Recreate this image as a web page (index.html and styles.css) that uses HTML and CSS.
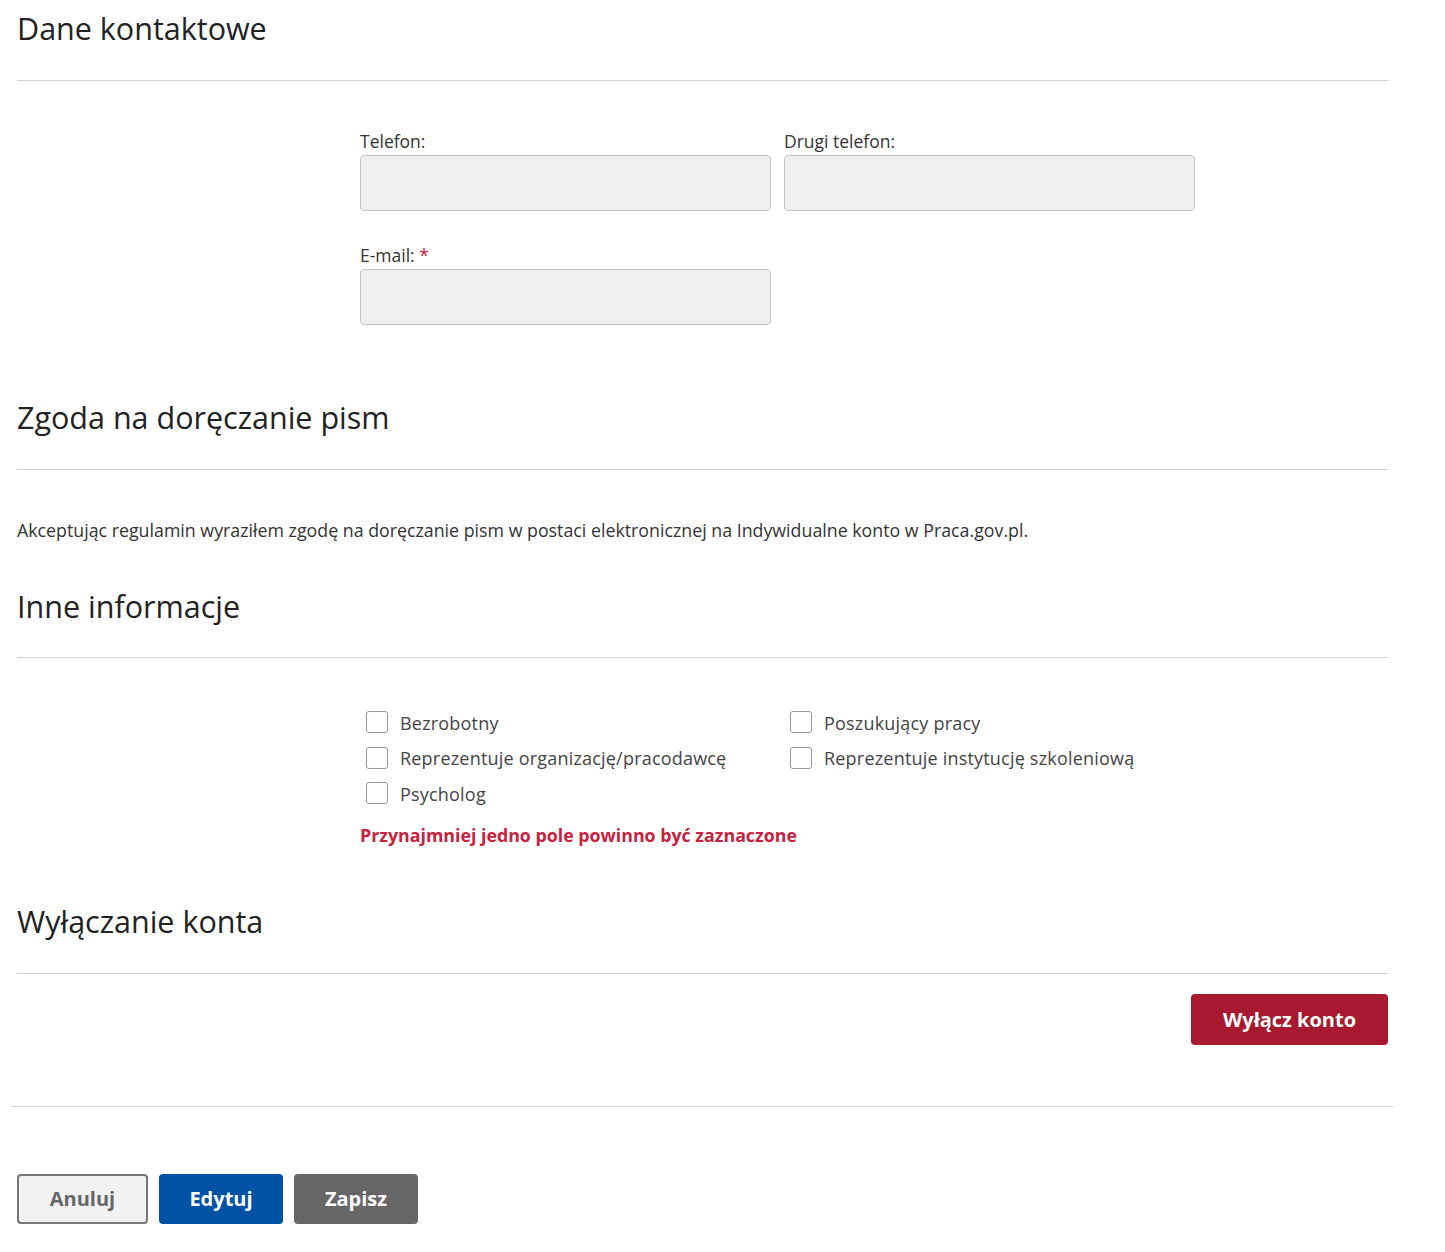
FILE: index.html
```html
<!DOCTYPE html>
<html lang="pl">

<head>
    <meta charset="UTF-8">
    <meta name="viewport" content="width=device-width, initial-scale=1.0">
    <title>Dane konta</title>
    <link rel="stylesheet" href="styles.css">
</head>

<body>

    <div class="page">

        <!-- Dane kontaktowe -->
        <section class="section section-contact">
            <h2 class="section-title">Dane kontaktowe</h2>
            <div class="section-body">
                <div class="form-grid">
                    <div class="field">
                        <label class="field-label">Telefon:</label>
                        <input class="field-input" type="text" disabled>
                    </div>
                    <div class="field">
                        <label class="field-label">Drugi telefon:</label>
                        <input class="field-input" type="text" disabled>
                    </div>
                    <div class="field">
                        <label class="field-label">E-mail: <span class="required">*</span></label>
                        <input class="field-input" type="text" disabled>
                    </div>
                </div>
            </div>
        </section>

        <!-- Zgoda -->
        <section class="section section-consent">
            <h2 class="section-title">Zgoda na doręczanie pism</h2>
            <div class="section-body">
                <p class="consent-text">Akceptując regulamin wyraziłem zgodę na doręczanie pism w postaci elektronicznej na Indywidualne konto w Praca.gov.pl.</p>
            </div>
        </section>

        <!-- Inne informacje -->
        <section class="section section-other">
            <h2 class="section-title">Inne informacje</h2>
            <div class="section-body">
                <div class="form-grid">
                    <div class="checks">
                        <label class="check"><span class="check-box"></span>Bezrobotny</label>
                        <label class="check"><span class="check-box"></span>Reprezentuje organizację/pracodawcę</label>
                        <label class="check"><span class="check-box"></span>Psycholog</label>
                    </div>
                    <div class="checks">
                        <label class="check"><span class="check-box"></span>Poszukujący pracy</label>
                        <label class="check"><span class="check-box"></span>Reprezentuje instytucję szkoleniową</label>
                    </div>
                </div>
                <div class="form-grid">
                    <p class="error-text">Przynajmniej jedno pole powinno być zaznaczone</p>
                </div>
            </div>
        </section>

        <!-- Wyłączanie konta -->
        <section class="section section-disable">
            <h2 class="section-title">Wyłączanie konta</h2>
            <div class="section-body">
                <button class="btn btn-danger">Wyłącz konto</button>
            </div>
        </section>

        <div class="actions">
            <button class="btn btn-cancel">Anuluj</button>
            <button class="btn btn-primary">Edytuj</button>
            <button class="btn btn-dark">Zapisz</button>
        </div>

    </div>

</body>

</html>
```

FILE: styles.css
```css
body {
    margin: 0;
    font-family: "Open Sans", "Noto Sans", Arial, sans-serif;
    color: #333333;
    background-color: #ffffff;
}

.page {
    width: 1371px;
    padding: 8px 0 0 17px;
}

.section-title {
    margin: 0;
    font-size: 30.5px;
    font-weight: 400;
    line-height: 40px;
    color: #222222;
    padding-bottom: 32px;
    border-bottom: 1px solid #d0d0d0;
}

.section-body {
    padding-top: 48px;
}

.section-contact .section-body {
    padding-bottom: 72px;
}

.section-consent .section-body {
    padding-bottom: 44px;
}

.section-other .section-title {
    padding-bottom: 31px;
}

.section-other .section-body {
    padding-top: 47px;
    padding-bottom: 54px;
}

.section-disable .section-body {
    padding-top: 20px;
    display: flex;
    justify-content: flex-end;
}

/* formularz - przesunięty o 1/4 szerokości */
.form-grid {
    margin-left: 343px;
    width: 835px;
    display: grid;
    grid-template-columns: 411px 411px;
    column-gap: 13px;
    row-gap: 32px;
}

.field {
    display: flex;
    flex-direction: column;
}

.field-label {
    font-size: 17.5px;
    line-height: 24px;
    color: #333333;
    margin-bottom: 2px;
}

.required {
    color: #c8193c;
}

.field-input {
    box-sizing: border-box;
    height: 56px;
    width: 100%;
    margin: 0;
    background-color: #f0f0f0;
    border: 1px solid #c6c6c6;
    border-radius: 4px;
}

.consent-text {
    margin: 0;
    font-size: 17.8px;
    line-height: 24px;
    color: #333333;
}

.checks {
    display: flex;
    flex-direction: column;
}

.check {
    display: flex;
    align-items: center;
    height: 35.5px;
    padding-left: 6px;
    font-size: 18px;
    color: #444444;
    letter-spacing: 0.2px;
}

.check-box {
    box-sizing: border-box;
    width: 22px;
    height: 22px;
    border: 1px solid #9a9a9a;
    border-radius: 3px;
    background-color: #ffffff;
    margin-right: 12px;
    margin-top: -1px;
}

.error-text {
    margin: 11px 0 0 0;
    font-size: 17.8px;
    line-height: 24px;
    font-weight: 700;
    color: #c8223f;
    grid-column: 1 / 3;
}

.btn {
    font-family: "Open Sans", "Noto Sans", Arial, sans-serif;
    font-size: 20px;
    font-weight: 700;
    border: none;
    border-radius: 4px;
    color: #ffffff;
    cursor: pointer;
    padding: 0;
}

.btn-danger {
    width: 197px;
    height: 51px;
    background-color: #a6192e;
}

.actions {
    box-sizing: border-box;
    margin-top: 61px;
    margin-left: -6px;
    width: 1383px;
    border-top: 1px solid #d6d6d6;
    padding: 67px 0 0 6px;
    display: flex;
    gap: 11px;
}

.actions .btn {
    height: 50px;
    width: 124px;
}

.actions .btn-cancel {
    width: 131px;
    background-color: #f2f2f2;
    border: 2px solid #777777;
    color: #666666;
}

.btn-primary {
    background-color: #0052a5;
}

.btn-dark {
    background-color: #666666;
}
```
